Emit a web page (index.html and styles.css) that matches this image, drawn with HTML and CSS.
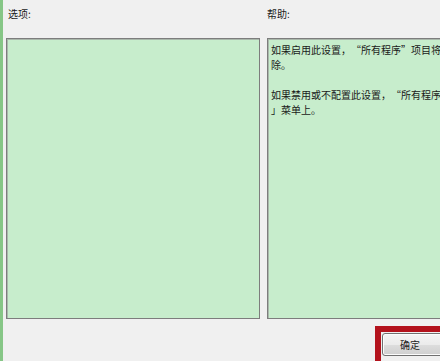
FILE: index.html
```html
<!DOCTYPE html>
<html>
  <head>
    <title>组策略 - 设置</title>
    <link rel="stylesheet" href="styles.css">
  </head>
  <body>

    <div class="window">
      <div class="dialog">
        <div class="label" id="options-label">选项:</div>
        <div class="label" id="help-label">帮助:</div>

        <div class="panel" id="options"></div>

        <div class="panel" id="help">
          <p>如果启用此设置，“所有程序”项目将从「开始」菜单中删</p>
          <p>除。</p>
          <p class="blank"></p>
          <p>如果禁用或不配置此设置，“所有程序”项目将显示在「开始</p>
          <p>」菜单上。</p>
        </div>

        <div class="footer">
          <div class="highlight">
            <button class="ok">确定</button>
          </div>
        </div>
      </div>
    </div>

  </body>
</html>
```

FILE: styles.css
```css
body, html {
  margin: 0;
  height: 100%;
  overflow: hidden;
}

body {
  font-family: "Noto Sans CJK SC", "Noto Sans", sans-serif;
  background-color: #f0f0f0;
  color: #1a1a1a;
}

/* green frame strip on the left */
.window {
  width: 437px;
  height: 361px;
  border-left: 3px solid #86c686;
  overflow: hidden;
}

.dialog {
  width: 524px;
  height: 361px;
  display: grid;
  grid-template-columns: 254px 260px;
  grid-template-rows: 38px 281px 1fr;
  column-gap: 7px;
  padding-left: 3px;
}

.label {
  font-size: 10px;
  line-height: 12px;
  padding-top: 8px;
}

#options-label {
  padding-left: 2px;
}

.panel {
  background-color: #c7edcc;
  border: 1px solid #7d7d7d;
  box-shadow: inset 1px 1px 0 #a9b8ab;
}

#help {
  padding: 3px 0 0 3px;
  font-size: 10px;
  line-height: 15px;
  overflow: hidden;
  font-feature-settings: "fwid";
  text-spacing-trim: space-all;
}

#help p {
  margin: 0;
  white-space: nowrap;
}

#help .blank {
  height: 15px;
}

/* Buttons */

.footer {
  grid-column: 1 / span 2;
  display: flex;
  padding-top: 7px;
}

.highlight {
  margin-left: 369px;
  width: 126px;
  border: 6px solid #b3121c;
  border-right: none;
  border-bottom: none;
  padding: 1px 0 0 1px;
}

.ok {
  display: block;
  width: 120px;
  height: 23px;
  font-family: "Noto Sans CJK SC", sans-serif;
  font-size: 10px;
  color: #222;
  border: 1px solid #707070;
  border-radius: 3px;
  background: linear-gradient(#f4f4f4, #ebebeb 50%, #dddddd 51%, #cfcfcf);
  box-shadow: inset 0 0 0 1px #fcfcfc;
  padding: 0;
  text-align: left;
  text-indent: 17px;
}
```
